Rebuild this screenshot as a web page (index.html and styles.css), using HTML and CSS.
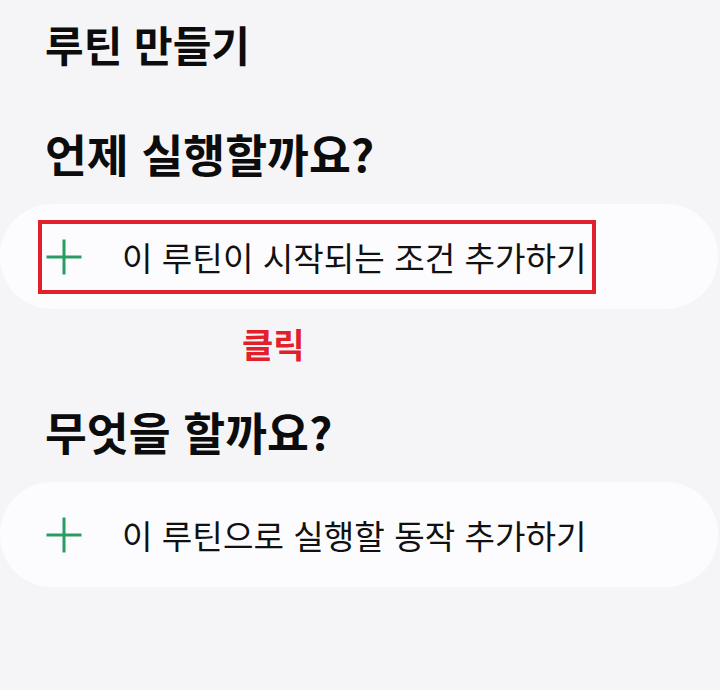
FILE: index.html
```html
<!DOCTYPE html>
<html lang="ko">
<head>
<meta charset="utf-8">
<title>루틴 만들기</title>
<link rel="stylesheet" href="styles.css">
</head>
<body>
<div class="page">
  <h1 class="title">루틴 만들기</h1>

  <h2 class="section">언제 실행할까요?</h2>
  <div class="card">
    <div class="row highlighted">
      <svg class="plus" viewBox="0 0 38 38" width="38" height="38" aria-hidden="true">
        <path d="M19 1.5V36.5M1.5 19H36.5" stroke="#2a9c62" stroke-width="3" fill="none"/>
      </svg>
      <span class="label">이 루틴이 시작되는 조건 추가하기</span>
    </div>
  </div>
  <div class="click">클릭</div>

  <h2 class="section second">무엇을 할까요?</h2>
  <div class="card">
    <div class="row">
      <svg class="plus" viewBox="0 0 38 38" width="38" height="38" aria-hidden="true">
        <path d="M19 1.5V36.5M1.5 19H36.5" stroke="#2a9c62" stroke-width="3" fill="none"/>
      </svg>
      <span class="label">이 루틴으로 실행할 동작 추가하기</span>
    </div>
  </div>
</div>
</body>
</html>
```

FILE: styles.css
```css
html, body {
  margin: 0;
  padding: 0;
  background: #f5f5f7;
}

body {
  width: 720px;
  height: 690px;
  overflow: hidden;
  font-family: "Noto Sans CJK KR", "Noto Sans", sans-serif;
  color: #0c0c0c;
}

.page {
  display: flex;
  flex-direction: column;
  padding-top: 18px;
}

.title {
  margin: 0 0 0 45px;
  font-size: 42px;
  line-height: 52px;
  font-weight: 700;
}

.section {
  margin: 55px 0 0 45px;
  font-size: 45.5px;
  line-height: 56px;
  font-weight: 700;
}

.section.second {
  margin-top: 37px;
}

.card {
  margin: 23px 2px 0 0;
  height: 105px;
  border-radius: 52px;
  background: #fcfcfe;
  display: flex;
  align-items: center;
  padding-left: 38px;
}

.row {
  display: flex;
  align-items: center;
  height: 74px;
  box-sizing: border-box;
  border: 4px solid transparent;
  padding: 0 5px 0 3px;
}

.row.highlighted {
  border-color: #e1202b;
}

.plus {
  flex: none;
  display: block;
}

.label {
  margin-left: 39px;
  font-size: 33.2px;
  font-weight: 400;
  color: #111;
  white-space: nowrap;
}

.click {
  margin: 13px 0 0 242px;
  font-size: 34px;
  line-height: 44px;
  font-weight: 700;
  color: #e1202b;
}
```
